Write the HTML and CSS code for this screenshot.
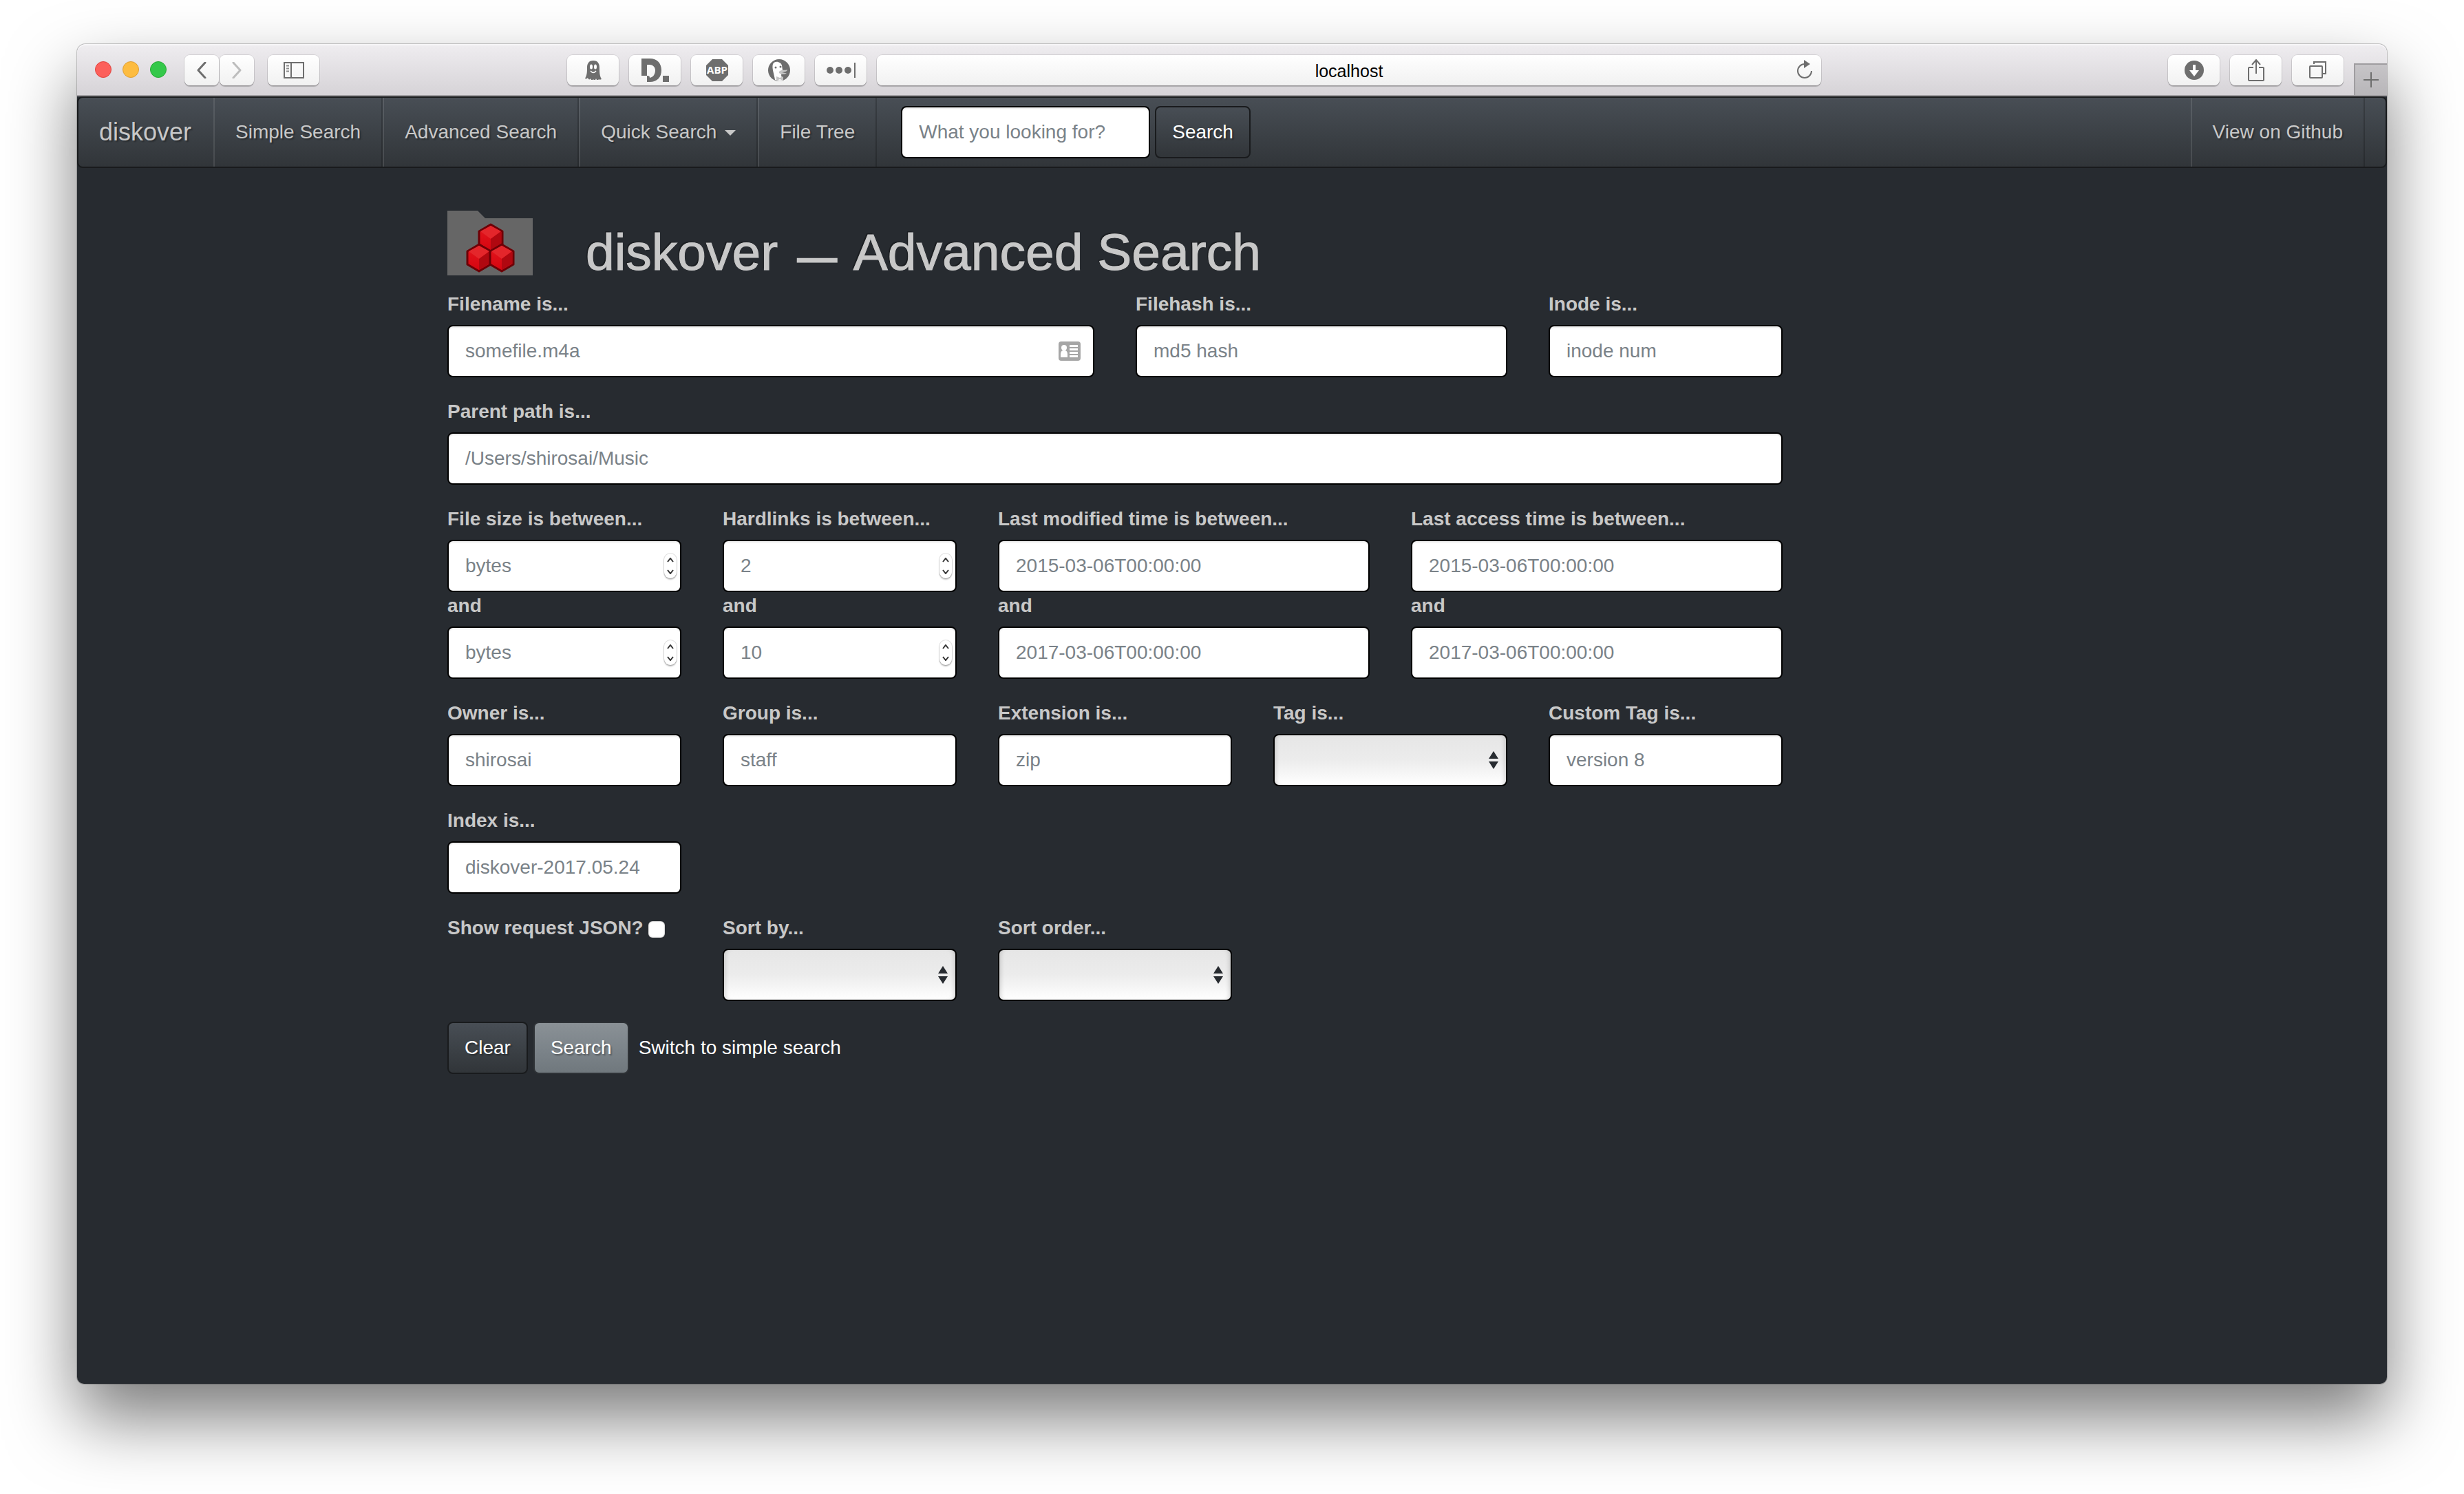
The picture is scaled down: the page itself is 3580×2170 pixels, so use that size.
FILE: index.html
```html
<!DOCTYPE html>
<html lang="en">
<head>
<meta charset="utf-8">
<title>diskover — Advanced Search</title>
<link rel="stylesheet" href="styles.css">
</head>
<body>
<div class="window">
  <header class="toolbar">
    <div class="lights"><span class="light red"></span><span class="light yellow"></span><span class="light green"></span></div>
    <div class="history">
      <button class="tool back" type="button" aria-label="Back"><svg width="14" height="24" viewBox="0 0 14 24"><path d="M12 1L2 12l10 11" fill="none" stroke="#6e6e6e" stroke-width="3" stroke-linecap="round" stroke-linejoin="round"/></svg></button>
      <button class="tool forward" type="button" aria-label="Forward"><svg width="14" height="24" viewBox="0 0 14 24"><path d="M2 1l10 11L2 23" fill="none" stroke="#bdbdbd" stroke-width="3" stroke-linecap="round" stroke-linejoin="round"/></svg></button>
    </div>
    <button class="tool" type="button" aria-label="Sidebar"><svg width="30" height="24" viewBox="0 0 30 24"><path d="M1 1h28v22H1zM11 1v22" fill="none" stroke="#6e6e6e" stroke-width="2"/><path d="M4 5.500h4M4 9.500h4M4 13.500h4" stroke="#8a8a8a" stroke-width="2"/></svg></button>
    <span class="space-left"></span>
    <div class="address">
      <button class="tool" type="button" aria-label="Ghostery"><svg width="24" height="28" viewBox="0 0 24 28"><path d="M12 0C5 0 3 5 3 10c0 6 0 11-3 16 2 1 3 0 4-1 1 3 3 3 4 1 1 3 3 3 4 1 1 2 3 2 4-1 1 3 3 3 4 1 1 1 2 1 4 0-3-5-3-11-3-17 0-5-2-10-9-10z" fill="#6e6e6e"/><ellipse cx="9" cy="9" rx="2" ry="3.500" fill="#fff"/><ellipse cx="15" cy="9" rx="2" ry="3.500" fill="#fff"/><path d="M8 15q4 5 8 0" fill="none" stroke="#fff" stroke-width="1.500"/></svg></button>
      <button class="tool" type="button" aria-label="Disconnect"><svg width="40" height="34" viewBox="0 0 40 34"><path fill-rule="evenodd" d="M0 0h12c11 0 17 7 17 17s-6 17-17 17H8V25H0zM8 9v16c2 0 4 0 4 3 5-1 8-5 8-11 0-5-4-8-8-8z" fill="#6e6e6e"/><path d="M31 25h9v9h-9z" fill="#6e6e6e"/></svg></button>
      <button class="tool" type="button" aria-label="Adblock Plus"><svg width="32" height="32" viewBox="0 0 32 32"><path d="M9 0h14l9 9v14l-9 9H9l-9-9V9z" fill="#6e6e6e"/><text x="16" y="21" text-anchor="middle" class="abp">ABP</text></svg></button>
      <button class="tool" type="button" aria-label="DuckDuckGo"><svg width="32" height="32" viewBox="0 0 32 32"><circle cx="16" cy="16" r="16" fill="#6e6e6e"/><path d="M10 30C9 22 5 13 7 7c3-6 12-3 13 2l1 7-2 7 2 8c-3 1-7 1-11-1z" fill="#fff"/><path d="M16 18c4-4 8-1 12-3 0 3-5 4-8 4 3 1 6 1 7 1-3 3-9 2-11 0z" fill="#c4c4c4"/><circle cx="11" cy="12" r="1.500" fill="#6e6e6e"/><circle cx="18" cy="11" r="1.500" fill="#6e6e6e"/><path d="M12 25l5 2 5-2v6l-5-2-5 2z" fill="#c4c4c4"/></svg></button>
      <button class="tool" type="button" aria-label="Passwords"><svg width="42" height="22" viewBox="0 0 42 22"><g fill="#6e6e6e"><circle cx="5" cy="11" r="5"/><circle cx="18" cy="11" r="5"/><circle cx="31" cy="11" r="5"/><path d="M40 0h2v22h-2z"/></g></svg></button>
      <div class="url">
        <input class="url-text" type="text" value="localhost" aria-label="Address">
        <button class="reload" type="button" aria-label="Reload"><svg width="24" height="28" viewBox="0 0 24 28"><path d="M12 6a10 10 0 1 0 10 10" fill="none" stroke="#6e6e6e" stroke-width="2"/><path d="M11 0v12l9-6z" fill="#6e6e6e"/></svg></button>
      </div>
    </div>
    <span class="space-right"></span>
    <div class="actions">
      <button class="tool" type="button" aria-label="Downloads"><svg width="28" height="28" viewBox="0 0 28 28"><circle cx="14" cy="14" r="14" fill="#6e6e6e"/><path d="M12 6h4v8h5l-7 9-7-9h5z" fill="#fff"/></svg></button>
      <button class="tool" type="button" aria-label="Share"><svg width="24" height="32" viewBox="0 0 24 32"><path d="M8 12H2q-1 0-1 1v17q0 1 1 1h20q1 0 1-1V13q0-1-1-1h-6M12 21V2M6 8l6-7 6 7" fill="none" stroke="#6e6e6e" stroke-width="2"/></svg></button>
      <button class="tool" type="button" aria-label="Tabs"><svg width="26" height="26" viewBox="0 0 26 26"><rect x="1" y="7" width="18" height="17" rx="1" fill="none" stroke="#6e6e6e" stroke-width="2"/><path d="M7 4V1h17v17h-4" fill="none" stroke="#6e6e6e" stroke-width="2"/></svg></button>
    </div>
    <button class="new-tab" type="button" aria-label="New tab"><svg width="22" height="22" viewBox="0 0 22 22"><path d="M11 0v22M0 11h22" stroke="#6e6e6e" stroke-width="2"/></svg></button>
  </header>

  <nav class="navbar">
    <a class="brand" href="#">diskover</a>
    <a class="nav-item" href="#">Simple Search</a>
    <a class="nav-item" href="#">Advanced Search</a>
    <a class="nav-item" href="#">Quick Search<span class="caret"></span></a>
    <a class="nav-item" href="#">File Tree</a>
    <form class="nav-search">
      <input class="field nav-field" type="text" placeholder="What you looking for?" aria-label="Search">
      <button class="btn" type="submit">Search</button>
    </form>
    <a class="nav-item nav-right" href="#">View on Github</a>
  </nav>

  <main class="container">
    <div class="heading">
      <svg class="logo" width="124" height="94" viewBox="0 0 124 94">
        <defs>
          <linearGradient id="lit" x1="0" y1="0" x2="0" y2="1"><stop offset="0" stop-color="#e4181f"/><stop offset="1" stop-color="#d4040f"/></linearGradient>
          <g id="cube">
            <path d="M0-19l17 10v19L0 20l-17-10V-9z" fill="url(#lit)" stroke="#6d0006" stroke-width="3" stroke-linejoin="round"/>
            <path d="M0-17l15 8L0 2l-15-11z" fill="#e4262b"/>
            <path d="M0 2l15-11V9L0 18z" fill="#b00810"/>
          </g>
        </defs>
        <path d="M0 0h44l11 11h69v83H0z" fill="#666"/>
        <use href="#cube" x="63" y="39"/><use href="#cube" x="46" y="68"/><use href="#cube" x="79" y="68"/>
      </svg>
      <h1 class="title">diskover <span class="dash">—</span> Advanced Search</h1>
    </div>

    <form class="search-form">
      <div class="row">
        <div class="group span5"><label for="filename">Filename is...</label>
          <div class="control"><input class="field" id="filename" type="text" placeholder="somefile.m4a">
            <svg class="contact" width="32" height="28" viewBox="0 0 32 28"><rect width="32" height="28" rx="4" fill="#a6a6a6"/><circle cx="8" cy="9" r="4" fill="#fff"/><path d="M3 23v-4q0-5 3-6h4q3 1 3 6v4zM16 5h12v3H16zM16 10h12v3H16zM16 15h12v3H16zM16 20h12v3H16z" fill="#fff"/></svg></div></div>
        <div class="group span3"><label for="filehash">Filehash is...</label><input class="field" id="filehash" type="text" placeholder="md5 hash"></div>
        <div class="group span2"><label for="inode">Inode is...</label><input class="field" id="inode" type="text" placeholder="inode num"></div>
      </div>
      <div class="row">
        <div class="group span10"><label for="path">Parent path is...</label><input class="field" id="path" type="text" placeholder="/Users/shirosai/Music"></div>
      </div>
      <div class="row">
        <div class="group span2">
          <label for="size-low">File size is between...</label>
          <div class="control"><input class="field" id="size-low" type="number" placeholder="bytes"><span class="stepper"><svg width="10" height="24" viewBox="0 0 10 24"><path d="M1 6l4-5 4 5M1 18l4 5 4-5" fill="none" stroke="#333" stroke-width="2"/></svg></span></div>
          <label for="size-high">and</label>
          <div class="control"><input class="field" id="size-high" type="number" placeholder="bytes"><span class="stepper"><svg width="10" height="24" viewBox="0 0 10 24"><path d="M1 6l4-5 4 5M1 18l4 5 4-5" fill="none" stroke="#333" stroke-width="2"/></svg></span></div>
        </div>
        <div class="group span2">
          <label for="links-low">Hardlinks is between...</label>
          <div class="control"><input class="field" id="links-low" type="number" placeholder="2"><span class="stepper"><svg width="10" height="24" viewBox="0 0 10 24"><path d="M1 6l4-5 4 5M1 18l4 5 4-5" fill="none" stroke="#333" stroke-width="2"/></svg></span></div>
          <label for="links-high">and</label>
          <div class="control"><input class="field" id="links-high" type="number" placeholder="10"><span class="stepper"><svg width="10" height="24" viewBox="0 0 10 24"><path d="M1 6l4-5 4 5M1 18l4 5 4-5" fill="none" stroke="#333" stroke-width="2"/></svg></span></div>
        </div>
        <div class="group span3">
          <label for="mod-low">Last modified time is between...</label><input class="field" id="mod-low" type="text" placeholder="2015-03-06T00:00:00">
          <label for="mod-high">and</label><input class="field" id="mod-high" type="text" placeholder="2017-03-06T00:00:00">
        </div>
        <div class="group span3">
          <label for="acc-low">Last access time is between...</label><input class="field" id="acc-low" type="text" placeholder="2015-03-06T00:00:00">
          <label for="acc-high">and</label><input class="field" id="acc-high" type="text" placeholder="2017-03-06T00:00:00">
        </div>
      </div>
      <div class="row">
        <div class="group span2"><label for="owner">Owner is...</label><input class="field" id="owner" type="text" placeholder="shirosai"></div>
        <div class="group span2"><label for="group">Group is...</label><input class="field" id="group" type="text" placeholder="staff"></div>
        <div class="group span2"><label for="ext">Extension is...</label><input class="field" id="ext" type="text" placeholder="zip"></div>
        <div class="group span2"><label for="tag">Tag is...</label><div class="control"><select class="field select" id="tag"><option></option></select><svg class="arrows" width="14" height="26" viewBox="0 0 14 26"><path d="M0 11L7 0l7 11zM0 15h14L7 26z" fill="#272b30"/></svg></div></div>
        <div class="group span2"><label for="custom">Custom Tag is...</label><input class="field" id="custom" type="text" placeholder="version 8"></div>
      </div>
      <div class="row">
        <div class="group span2"><label for="index">Index is...</label><input class="field" id="index" type="text" placeholder="diskover-2017.05.24"></div>
      </div>
      <div class="row">
        <div class="check span2"><label for="json">Show request JSON?</label><input class="checkbox" id="json" type="checkbox"></div>
        <div class="group span2"><label for="sort">Sort by...</label><div class="control"><select class="field select" id="sort"><option></option></select><svg class="arrows" width="14" height="26" viewBox="0 0 14 26"><path d="M0 11L7 0l7 11zM0 15h14L7 26z" fill="#272b30"/></svg></div></div>
        <div class="group span2"><label for="order">Sort order...</label><div class="control"><select class="field select" id="order"><option></option></select><svg class="arrows" width="14" height="26" viewBox="0 0 14 26"><path d="M0 11L7 0l7 11zM0 15h14L7 26z" fill="#272b30"/></svg></div></div>
      </div>
      <div class="buttons">
        <button class="btn" type="reset">Clear</button>
        <button class="btn btn-primary" type="submit">Search</button>
        <a class="switch" href="#">Switch to simple search</a>
      </div>
    </form>
  </main>
</div>
</body>
</html>
```
FILE: styles.css
```css
* { box-sizing: border-box; }

body {
  margin: 0;
  min-height: 100vh;
  padding: 64px 112px 160px;
  display: flex;
  background: #fff;
  color: #c8c8c8;
  font: 28px/40px "Liberation Sans", Arial, sans-serif;
}

svg { display: block; }
input, button, select { font: inherit; margin: 0; }
a { color: inherit; text-decoration: none; }

.window {
  flex: 1;
  min-width: 0;
  border-radius: 12px 12px 10px 10px;
  background: #272b30;
  box-shadow: 0 0 0 1px rgba(0, 0, 0, .2), 0 50px 100px rgba(0, 0, 0, .52);
}

/* Browser toolbar */
.toolbar {
  display: flex;
  align-items: flex-start;
  height: 76px;
  padding: 16px 0 0 26px;
  border-bottom: 2px solid #9f9da0;
  border-radius: 12px 12px 0 0;
  background: linear-gradient(#efedf0, #d6d3d7);
  box-shadow: inset 0 2px #f6f5f7;
}

.lights { display: flex; gap: 16px; margin: 9px 26px 0 0; }
.light { width: 24px; height: 24px; border-radius: 50%; border: 1px solid; }
.red { background: #fc605b; border-color: #e0443f; }
.yellow { background: #fdbc40; border-color: #de9f34; }
.green { background: #34c84a; border-color: #27aa35; }

.history { display: flex; gap: 1px; margin-right: 20px; }

.tool {
  display: flex;
  align-items: center;
  justify-content: center;
  flex: none;
  width: 75px;
  height: 44px;
  padding: 0;
  border: 0;
  border-radius: 8px;
  background: linear-gradient(#fff, #f1f1f1);
  box-shadow: 0 0 0 1px rgba(0, 0, 0, .1), 0 2px 1px rgba(0, 0, 0, .22);
}
.back, .forward { width: 50px; }

.space-left { flex: 5; }
.space-right { flex: 7; }

.address { display: flex; gap: 15px; flex: 0 1 1822px; min-width: 0; }
.url {
  position: relative;
  flex: 1;
  min-width: 0;
  height: 44px;
  border-radius: 8px;
  background: linear-gradient(#fff, #f1f1f1);
  box-shadow: 0 0 0 1px rgba(0, 0, 0, .1), 0 2px 1px rgba(0, 0, 0, .22);
}
.url-text {
  width: 100%;
  height: 44px;
  padding: 3px 0 0;
  border: 0;
  background: none;
  color: #000;
  font-size: 25px;
  text-align: center;
}
.reload {
  position: absolute;
  top: 7px;
  right: 12px;
  padding: 0;
  border: 0;
  background: none;
}
.abp { font: bold 15px "Open Sans", sans-serif; fill: #fff; }

.actions { display: flex; gap: 15px; }
.new-tab {
  align-self: flex-end;
  display: flex;
  align-items: center;
  justify-content: center;
  width: 48px;
  height: 46px;
  margin-left: 15px;
  padding: 0;
  border: solid #9f9da0;
  border-width: 2px 0 0 2px;
  background: linear-gradient(#c6c4c7, #b8b6b9);
}

/* Site navigation */
.navbar {
  display: flex;
  align-items: stretch;
  padding: 0 30px 0 0;
  border: 2px solid #191b1d;
  border-radius: 8px;
  background: linear-gradient(#484e55, #3a3f44 60%, #313539);
  text-shadow: 2px 2px 2px rgba(0, 0, 0, .3);
}
.brand { padding: 30px 32px 30px 30px; font-size: 36px; }
.nav-item {
  display: flex;
  align-items: center;
  padding: 30px;
  border-left: 2px solid rgba(255, 255, 255, .1);
  border-right: 2px solid rgba(0, 0, 0, .2);
  white-space: nowrap;
}
.nav-right { margin-left: auto; }
.caret {
  margin: 2px 0 0 12px;
  border: 8px solid transparent;
  border-top-color: #c8c8c8;
  border-bottom: 0;
}
.nav-search { display: flex; align-items: center; gap: 7px; margin-left: 35px; }

/* Controls */
.field {
  display: block;
  width: 100%;
  height: 76px;
  padding: 16px 24px;
  border: 2px solid #000;
  border-radius: 8px;
  background: #fff;
  color: #272b30;
  box-shadow: inset 0 2px 2px rgba(0, 0, 0, .08);
}
.field::placeholder { color: #7a8288; opacity: 1; }
.field[type="number"] { appearance: textfield; }
.nav-field { width: 362px; }

.select {
  appearance: none;
  background: linear-gradient(#e6e6e6, #ececec 50%, #fff);
  box-shadow: inset 6px 0 6px -4px rgba(0, 0, 0, .15), inset -6px 0 6px -4px rgba(0, 0, 0, .15);
}

.control { position: relative; }
.arrows { position: absolute; top: 25px; right: 13px; }
.contact { position: absolute; top: 24px; right: 20px; }
.stepper {
  position: absolute;
  top: 20px;
  right: 7px;
  display: grid;
  place-items: center;
  width: 18px;
  height: 36px;
  border-radius: 9px;
  background: #fff;
  box-shadow: 0 0 0 1px rgba(0, 0, 0, .12), 0 2px 2px rgba(0, 0, 0, .25);
}

.btn {
  height: 76px;
  padding: 16px 23px;
  border: 2px solid #191b1d;
  border-radius: 8px;
  background: linear-gradient(#484e55, #3a3f44 60%, #313539);
  color: #fff;
  text-shadow: 2px 2px 2px rgba(0, 0, 0, .3);
}
.btn-primary {
  border-color: #2e3236;
  background: linear-gradient(#8a9196, #7a8288 60%, #70787d);
}

/* Page */
.container { max-width: 2340px; margin: 0 auto; padding: 62px 30px; }
.heading { display: flex; height: 116px; gap: 77px; }
.title {
  margin: 20px 0 0;
  font-size: 75px;
  line-height: 80px;
  font-weight: 400;
  white-space: nowrap;
  -webkit-text-stroke: 1px #c8c8c8;
  text-shadow: -2px -2px 0 rgba(0, 0, 0, .3);
}
.dash { margin: 0 8px; font-size: 56px; -webkit-text-stroke-width: 3px; }

.search-form { max-width: 1940px; display: grid; gap: 30px; }
.row { display: grid; grid-template-columns: repeat(10, 1fr); column-gap: 60px; }
.span2 { grid-column: span 2; }
.span3 { grid-column: span 3; }
.span5 { grid-column: span 5; }
.span10 { grid-column: span 10; }
.group { min-width: 0; }

label { display: block; font-weight: 700; white-space: nowrap; }
.group label { margin-bottom: 10px; }

.check { display: flex; align-items: flex-start; gap: 7px; }
.checkbox {
  appearance: none;
  flex: none;
  width: 24px;
  height: 24px;
  margin-top: 10px;
  border-radius: 6px;
  background: #fff;
  box-shadow: inset 0 0 2px rgba(0, 0, 0, .5);
}

.buttons { display: flex; align-items: center; gap: 8px; }
.switch { margin-left: 6px; color: #fff; }
```
